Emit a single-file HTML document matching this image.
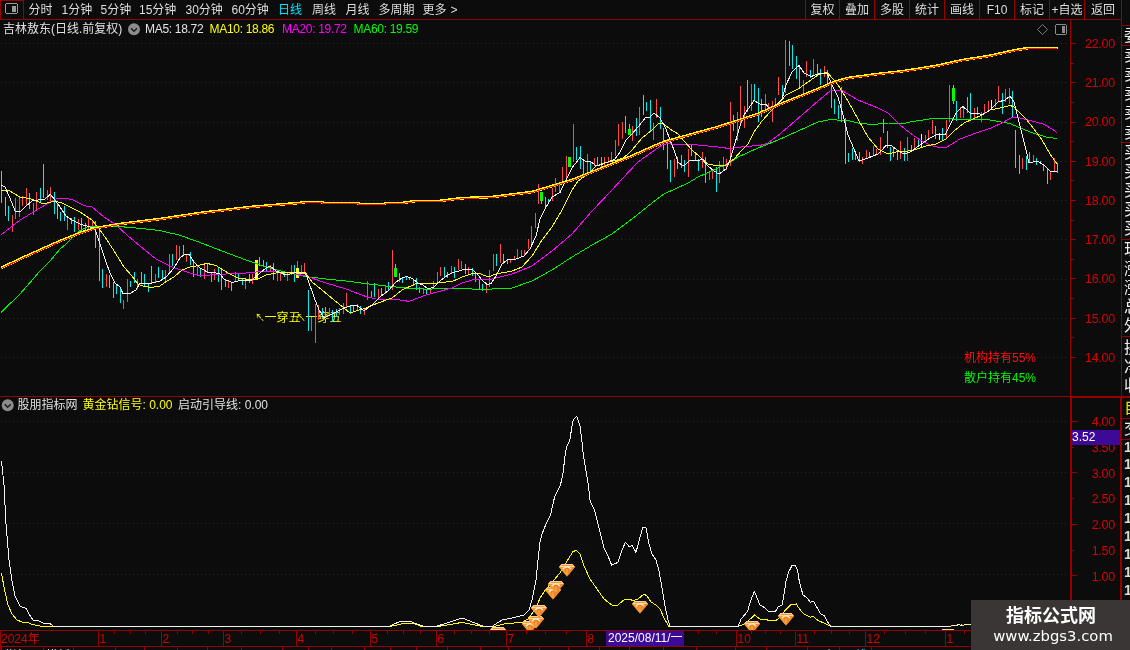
<!DOCTYPE html>
<html lang="zh"><head><meta charset="utf-8"><title>吉林敖东 日线</title>
<style>
html,body{margin:0;padding:0;background:#0c0c0c}
body{width:1130px;height:650px;position:relative;overflow:hidden;font-family:"Liberation Sans","Noto Sans CJK SC",sans-serif;font-size:12px;color:#dcdcdc}
svg{position:absolute;left:0;top:0}
#txt,#under{position:absolute;left:0;top:0;width:1130px;height:650px;will-change:transform}
#side,#wm{will-change:transform}
.dot{stroke:#8c0000;stroke-width:1;stroke-dasharray:1 3;shape-rendering:crispEdges}
.pl{fill:none;stroke-width:1;shape-rendering:crispEdges;stroke-linejoin:round}
svg rect{shape-rendering:crispEdges}
.t{position:absolute;white-space:nowrap;line-height:19px;height:19px}
.tb{color:#dedede}
.tb.sel{color:#00e5ff}
.r2{color:#e0e0e0}
.ma{letter-spacing:-0.3px}
.ann{color:#ffff00}
.hold{letter-spacing:0}
.ax{right:15px;color:#d80000;text-align:right;font-size:12.5px;letter-spacing:-0.25px}
.tm{color:#d80000;line-height:18px}
.bt{color:#f0f0f0;line-height:14px}
.pbox{position:absolute;background:#3c0a96;color:#fff;overflow:hidden}
.pbox span{position:absolute;left:0;top:-2px;line-height:19px;white-space:nowrap}
#side{position:absolute;left:1122px;top:20px;width:8px;height:630px;overflow:hidden}
#side .sd{position:absolute;left:2px;font-size:16px;line-height:24px;white-space:nowrap;margin-top:-20px}
#side .one{font-weight:bold;font-size:14px;line-height:18px;left:2px}
#side i{position:absolute;left:0;width:8px;height:1px;background:#960000;margin-top:-20px}
#wm{position:absolute;left:971px;top:600px;width:159px;height:50px;background:#3b3636;color:#fff;text-align:center}
#wm b{position:absolute;left:0;width:160px;top:3.3px;font-size:18px;line-height:26px;font-weight:bold;letter-spacing:0}
#wm span{position:absolute;left:0;width:164px;top:25px;font-size:14.8px;line-height:22px;font-family:"DejaVu Sans","Liberation Sans",sans-serif}
</style></head><body>
<div id="under"><span class="t ann" style="left:255px;top:307.7px;font-size:10px">↖</span><span class="t ann" style="left:264.5px;top:308.9px">一穿五</span><span class="t ann" style="left:296px;top:307.7px;font-size:10px">↖</span><span class="t ann" style="left:305.5px;top:308.9px">一穿五</span></div>
<svg width="1130" height="650" viewBox="0 0 1130 650">
<defs>
<linearGradient id="dg1" x1="0" y1="0" x2="0" y2="1"><stop offset="0" stop-color="#ffe2a8"/><stop offset="1" stop-color="#f59a30"/></linearGradient>
<linearGradient id="dg2" x1="0" y1="0" x2="0" y2="1"><stop offset="0" stop-color="#f8a23a"/><stop offset="1" stop-color="#e8761a"/></linearGradient>
<g id="dia"><path d="M2.5 0 H13.5 L16 3 L8 12.4 L0 3 Z" fill="#ee7f1c"/><path d="M0 3 L8 12.4 L5.2 3 Z" fill="#f59c3c"/><path d="M10.8 3 L8 12.4 L16 3 Z" fill="#f08a28"/><path d="M2.5 0 H13.5 L16 3 H0 Z" fill="#ffd494"/><path d="M2.5 1.5 H13.5" stroke="#ee9448" stroke-width="1" fill="none"/><path d="M4 5 Q8 0.8 12 5" stroke="#fff1cf" stroke-width="1.3" fill="none"/><path d="M8 5 V11" stroke="#f8b763" stroke-width="1" fill="none"/></g>
<clipPath id="cpd"><rect x="0" y="396" width="1070" height="234"/></clipPath>
</defs>
<line x1="1" x2="1067" y1="43.5" y2="43.5" class="dot"/>
<line x1="1" x2="1067" y1="82.5" y2="82.5" class="dot"/>
<line x1="1" x2="1067" y1="122.5" y2="122.5" class="dot"/>
<line x1="1" x2="1067" y1="161.5" y2="161.5" class="dot"/>
<line x1="1" x2="1067" y1="200.5" y2="200.5" class="dot"/>
<line x1="1" x2="1067" y1="239.5" y2="239.5" class="dot"/>
<line x1="1" x2="1067" y1="279.5" y2="279.5" class="dot"/>
<line x1="1" x2="1067" y1="318.5" y2="318.5" class="dot"/>
<line x1="1" x2="1067" y1="357.5" y2="357.5" class="dot"/>
<line x1="1" x2="1067" y1="421.5" y2="421.5" class="dot"/>
<line x1="1" x2="1067" y1="472.5" y2="472.5" class="dot"/>
<line x1="1" x2="1067" y1="523.5" y2="523.5" class="dot"/>
<line x1="1" x2="1067" y1="574.5" y2="574.5" class="dot"/>
<rect x="0" y="19" width="1122" height="1" fill="#960000"/>
<rect x="0" y="0" width="1" height="20" fill="#960000"/>
<rect x="23" y="0" width="1" height="20" fill="#960000"/>
<rect x="0" y="0" width="24" height="1" fill="#960000"/>
<rect x="805" y="0" width="1" height="19" fill="#960000"/>
<rect x="839" y="0" width="1" height="19" fill="#960000"/>
<rect x="874" y="0" width="1" height="19" fill="#960000"/>
<rect x="909" y="0" width="1" height="19" fill="#960000"/>
<rect x="944" y="0" width="1" height="19" fill="#960000"/>
<rect x="979" y="0" width="1" height="19" fill="#960000"/>
<rect x="1014" y="0" width="1" height="19" fill="#960000"/>
<rect x="1049" y="0" width="1" height="19" fill="#960000"/>
<rect x="1084" y="0" width="1" height="19" fill="#960000"/>
<rect x="1121" y="0" width="1" height="397" fill="#960000"/>
<rect x="1120" y="397" width="2" height="253" fill="#960000"/>
<rect x="1070" y="20" width="1" height="376" fill="#960000"/>
<rect x="1070" y="396" width="2" height="235" fill="#960000"/>
<rect x="0" y="396" width="1070" height="1" fill="#960000"/>
<rect x="1070" y="396" width="60" height="2" fill="#960000"/>
<rect x="0" y="630" width="1071" height="1" fill="#960000"/>
<rect x="0" y="646" width="1071" height="1" fill="#960000"/>
<rect x="0" y="630" width="1" height="20" fill="#960000"/>
<rect x="1071" y="43" width="5" height="1" fill="#960000"/>
<rect x="1071" y="63" width="3" height="1" fill="#960000"/>
<rect x="1071" y="82" width="5" height="1" fill="#960000"/>
<rect x="1071" y="102" width="3" height="1" fill="#960000"/>
<rect x="1071" y="122" width="5" height="1" fill="#960000"/>
<rect x="1071" y="141" width="3" height="1" fill="#960000"/>
<rect x="1071" y="161" width="5" height="1" fill="#960000"/>
<rect x="1071" y="180" width="3" height="1" fill="#960000"/>
<rect x="1071" y="200" width="5" height="1" fill="#960000"/>
<rect x="1071" y="220" width="3" height="1" fill="#960000"/>
<rect x="1071" y="239" width="5" height="1" fill="#960000"/>
<rect x="1071" y="259" width="3" height="1" fill="#960000"/>
<rect x="1071" y="278" width="5" height="1" fill="#960000"/>
<rect x="1071" y="298" width="3" height="1" fill="#960000"/>
<rect x="1071" y="318" width="5" height="1" fill="#960000"/>
<rect x="1071" y="337" width="3" height="1" fill="#960000"/>
<rect x="1071" y="357" width="5" height="1" fill="#960000"/>
<rect x="1072" y="421" width="5" height="1" fill="#960000"/>
<rect x="1072" y="447" width="2" height="1" fill="#960000"/>
<rect x="1072" y="472" width="5" height="1" fill="#960000"/>
<rect x="1072" y="498" width="2" height="1" fill="#960000"/>
<rect x="1072" y="524" width="5" height="1" fill="#960000"/>
<rect x="1072" y="550" width="2" height="1" fill="#960000"/>
<rect x="1072" y="575" width="5" height="1" fill="#960000"/>
<rect x="1072" y="601" width="2" height="1" fill="#960000"/>
<rect x="98" y="631" width="1" height="15" fill="#960000"/>
<rect x="161" y="631" width="1" height="15" fill="#960000"/>
<rect x="223" y="631" width="1" height="15" fill="#960000"/>
<rect x="296" y="631" width="1" height="15" fill="#960000"/>
<rect x="370" y="631" width="1" height="15" fill="#960000"/>
<rect x="436" y="631" width="1" height="15" fill="#960000"/>
<rect x="506" y="631" width="1" height="15" fill="#960000"/>
<rect x="586" y="631" width="1" height="15" fill="#960000"/>
<rect x="736" y="631" width="1" height="15" fill="#960000"/>
<rect x="795" y="631" width="1" height="15" fill="#960000"/>
<rect x="865" y="631" width="1" height="15" fill="#960000"/>
<rect x="945" y="631" width="1" height="15" fill="#960000"/>
<rect x="666" y="631" width="1" height="15" fill="#960000"/>
<rect x="114" y="631" width="1" height="3" fill="#960000"/>
<rect x="130" y="631" width="1" height="3" fill="#960000"/>
<rect x="145" y="631" width="1" height="3" fill="#960000"/>
<rect x="177" y="631" width="1" height="3" fill="#960000"/>
<rect x="192" y="631" width="1" height="3" fill="#960000"/>
<rect x="208" y="631" width="1" height="3" fill="#960000"/>
<rect x="241" y="631" width="1" height="3" fill="#960000"/>
<rect x="260" y="631" width="1" height="3" fill="#960000"/>
<rect x="279" y="631" width="1" height="3" fill="#960000"/>
<rect x="315" y="631" width="1" height="3" fill="#960000"/>
<rect x="333" y="631" width="1" height="3" fill="#960000"/>
<rect x="352" y="631" width="1" height="3" fill="#960000"/>
<rect x="387" y="631" width="1" height="3" fill="#960000"/>
<rect x="403" y="631" width="1" height="3" fill="#960000"/>
<rect x="420" y="631" width="1" height="3" fill="#960000"/>
<rect x="454" y="631" width="1" height="3" fill="#960000"/>
<rect x="471" y="631" width="1" height="3" fill="#960000"/>
<rect x="489" y="631" width="1" height="3" fill="#960000"/>
<rect x="526" y="631" width="1" height="3" fill="#960000"/>
<rect x="545" y="631" width="1" height="3" fill="#960000"/>
<rect x="566" y="631" width="1" height="3" fill="#960000"/>
<rect x="698" y="631" width="1" height="3" fill="#960000"/>
<rect x="716" y="631" width="1" height="3" fill="#960000"/>
<rect x="751" y="631" width="1" height="3" fill="#960000"/>
<rect x="765" y="631" width="1" height="3" fill="#960000"/>
<rect x="780" y="631" width="1" height="3" fill="#960000"/>
<rect x="814" y="631" width="1" height="3" fill="#960000"/>
<rect x="831" y="631" width="1" height="3" fill="#960000"/>
<rect x="849" y="631" width="1" height="3" fill="#960000"/>
<rect x="884" y="631" width="1" height="3" fill="#960000"/>
<rect x="905" y="631" width="1" height="3" fill="#960000"/>
<rect x="925" y="631" width="1" height="3" fill="#960000"/>
<rect x="964" y="631" width="1" height="3" fill="#960000"/>
<rect x="1" y="647" width="1" height="3" fill="#960000"/>
<rect x="43" y="647" width="1" height="3" fill="#960000"/>
<rect x="73" y="647" width="1" height="3" fill="#960000"/>
<rect x="115" y="647" width="1" height="3" fill="#960000"/>
<rect x="144" y="647" width="1" height="3" fill="#960000"/>
<rect x="177" y="647" width="1" height="3" fill="#960000"/>
<rect x="207" y="647" width="1" height="3" fill="#960000"/>
<rect x="241" y="647" width="1" height="3" fill="#960000"/>
<rect x="282" y="647" width="1" height="3" fill="#960000"/>
<rect x="308" y="647" width="1" height="3" fill="#960000"/>
<rect x="331" y="647" width="1" height="3" fill="#960000"/>
<rect x="364" y="647" width="1" height="3" fill="#960000"/>
<rect x="390" y="647" width="1" height="3" fill="#960000"/>
<rect x="416" y="647" width="1" height="3" fill="#960000"/>
<rect x="447" y="647" width="1" height="3" fill="#960000"/>
<rect x="480" y="647" width="1" height="3" fill="#960000"/>
<rect x="508" y="647" width="1" height="3" fill="#960000"/>
<rect x="539" y="647" width="1" height="3" fill="#960000"/>
<rect x="568" y="647" width="1" height="3" fill="#960000"/>
<rect x="599" y="647" width="1" height="3" fill="#960000"/>
<rect x="629" y="647" width="1" height="3" fill="#960000"/>
<rect x="663" y="647" width="1" height="3" fill="#960000"/>
<rect x="696" y="647" width="1" height="3" fill="#960000"/>
<rect x="735" y="647" width="1" height="3" fill="#960000"/>
<rect x="766" y="647" width="1" height="3" fill="#960000"/>
<rect x="807" y="647" width="1" height="3" fill="#960000"/>
<rect x="839" y="647" width="1" height="3" fill="#960000"/>
<rect x="871" y="647" width="1" height="3" fill="#960000"/>
<rect x="1" y="171" width="1" height="32" fill="#00f0f0"/>
<rect x="5" y="197" width="1" height="19" fill="#00f0f0"/>
<rect x="8" y="206" width="1" height="15" fill="#00f0f0"/>
<rect x="12" y="215" width="1" height="17" fill="#ff4848"/>
<rect x="15" y="198" width="1" height="21" fill="#ff4848"/>
<rect x="19" y="197" width="1" height="20" fill="#ff4848"/>
<rect x="22" y="196" width="1" height="10" fill="#ff4848"/>
<rect x="26" y="188" width="1" height="17" fill="#ff4848"/>
<rect x="29" y="193" width="1" height="16" fill="#00f0f0"/>
<rect x="33" y="203" width="1" height="12" fill="#ff4848"/>
<rect x="36" y="192" width="1" height="18" fill="#ff4848"/>
<rect x="40" y="188" width="1" height="14" fill="#00f0f0"/>
<rect x="43" y="164" width="1" height="34" fill="#00f0f0"/>
<rect x="47" y="190" width="1" height="10" fill="#ff4848"/>
<rect x="50" y="187" width="1" height="15" fill="#ff4848"/>
<rect x="54" y="192" width="1" height="22" fill="#00f0f0"/>
<rect x="57" y="204" width="1" height="15" fill="#00f0f0"/>
<rect x="60" y="212" width="1" height="9" fill="#00f0f0"/>
<rect x="64" y="206" width="1" height="15" fill="#00f0f0"/>
<rect x="67" y="217" width="1" height="13" fill="#ff4848"/>
<rect x="71" y="218" width="1" height="6" fill="#00f0f0"/>
<rect x="74" y="217" width="1" height="15" fill="#00f0f0"/>
<rect x="78" y="219" width="1" height="11" fill="#ff4848"/>
<rect x="81" y="218" width="1" height="13" fill="#00f0f0"/>
<rect x="85" y="223" width="1" height="8" fill="#00f0f0"/>
<rect x="88" y="218" width="1" height="11" fill="#ff4848"/>
<rect x="92" y="220" width="1" height="9" fill="#ff4848"/>
<rect x="95" y="221" width="1" height="27" fill="#00f0f0"/>
<rect x="99" y="229" width="1" height="52" fill="#00f0f0"/>
<rect x="102" y="269" width="1" height="19" fill="#00f0f0"/>
<rect x="106" y="274" width="1" height="13" fill="#ff4848"/>
<rect x="109" y="275" width="1" height="13" fill="#00f0f0"/>
<rect x="113" y="282" width="1" height="16" fill="#00f0f0"/>
<rect x="116" y="285" width="1" height="9" fill="#00f0f0"/>
<rect x="120" y="287" width="1" height="16" fill="#00f0f0"/>
<rect x="123" y="300" width="1" height="9" fill="#ff4848"/>
<rect x="127" y="279" width="1" height="23" fill="#ff4848"/>
<rect x="130" y="281" width="1" height="6" fill="#00f0f0"/>
<rect x="134" y="272" width="1" height="11" fill="#00f0f0"/>
<rect x="137" y="279" width="1" height="10" fill="#ff4848"/>
<rect x="141" y="272" width="1" height="12" fill="#00f0f0"/>
<rect x="144" y="274" width="1" height="12" fill="#00f0f0"/>
<rect x="148" y="283" width="1" height="9" fill="#00f0f0"/>
<rect x="151" y="266" width="1" height="17" fill="#00f0f0"/>
<rect x="155" y="274" width="1" height="9" fill="#ff4848"/>
<rect x="158" y="267" width="1" height="11" fill="#00f0f0"/>
<rect x="162" y="270" width="1" height="10" fill="#00f0f0"/>
<rect x="165" y="270" width="1" height="11" fill="#ff4848"/>
<rect x="169" y="254" width="1" height="19" fill="#ff4848"/>
<rect x="172" y="254" width="1" height="12" fill="#00f0f0"/>
<rect x="176" y="245" width="1" height="15" fill="#ff4848"/>
<rect x="179" y="246" width="1" height="14" fill="#ff4848"/>
<rect x="183" y="245" width="1" height="11" fill="#00f0f0"/>
<rect x="186" y="254" width="1" height="8" fill="#ff4848"/>
<rect x="190" y="252" width="1" height="13" fill="#00f0f0"/>
<rect x="193" y="260" width="1" height="17" fill="#00f0f0"/>
<rect x="197" y="265" width="1" height="11" fill="#ff4848"/>
<rect x="200" y="269" width="1" height="8" fill="#00f0f0"/>
<rect x="204" y="265" width="1" height="14" fill="#ff4848"/>
<rect x="207" y="264" width="1" height="9" fill="#00f0f0"/>
<rect x="211" y="273" width="1" height="9" fill="#00f0f0"/>
<rect x="214" y="269" width="1" height="11" fill="#ff4848"/>
<rect x="218" y="267" width="1" height="15" fill="#00f0f0"/>
<rect x="221" y="270" width="1" height="20" fill="#00f0f0"/>
<rect x="225" y="280" width="1" height="7" fill="#00f0f0"/>
<rect x="228" y="281" width="1" height="7" fill="#ff4848"/>
<rect x="231" y="283" width="1" height="8" fill="#00f0f0"/>
<rect x="235" y="272" width="1" height="10" fill="#ff4848"/>
<rect x="238" y="273" width="1" height="8" fill="#00f0f0"/>
<rect x="242" y="278" width="1" height="7" fill="#00f0f0"/>
<rect x="245" y="281" width="1" height="8" fill="#ff4848"/>
<rect x="249" y="274" width="1" height="9" fill="#00f0f0"/>
<rect x="252" y="274" width="1" height="10" fill="#ff4848"/>
<rect x="255" y="260" width="3" height="19" fill="#ffff00"/>
<rect x="259" y="257" width="1" height="9" fill="#00f0f0"/>
<rect x="263" y="260" width="1" height="7" fill="#00f0f0"/>
<rect x="266" y="262" width="1" height="9" fill="#00f0f0"/>
<rect x="270" y="265" width="1" height="7" fill="#ff4848"/>
<rect x="273" y="263" width="1" height="17" fill="#00f0f0"/>
<rect x="277" y="273" width="1" height="8" fill="#ff4848"/>
<rect x="280" y="273" width="1" height="8" fill="#ff4848"/>
<rect x="284" y="271" width="1" height="6" fill="#00f0f0"/>
<rect x="287" y="273" width="1" height="8" fill="#ff4848"/>
<rect x="291" y="265" width="1" height="10" fill="#ff4848"/>
<rect x="294" y="265" width="1" height="17" fill="#00f0f0"/>
<rect x="297" y="261" width="1" height="7" fill="#ff4848"/>
<rect x="296" y="268" width="3" height="10" fill="#ffff00"/>
<rect x="301" y="265" width="1" height="8" fill="#ff4848"/>
<rect x="304" y="263" width="1" height="11" fill="#ff4848"/>
<rect x="308" y="290" width="1" height="41" fill="#00f0f0"/>
<rect x="311" y="317" width="1" height="14" fill="#ff4848"/>
<rect x="315" y="304" width="1" height="39" fill="#ff4848"/>
<rect x="318" y="305" width="1" height="15" fill="#ff4848"/>
<rect x="322" y="308" width="1" height="10" fill="#00f0f0"/>
<rect x="325" y="307" width="1" height="11" fill="#00f0f0"/>
<rect x="329" y="308" width="1" height="8" fill="#ff4848"/>
<rect x="332" y="310" width="1" height="12" fill="#00f0f0"/>
<rect x="336" y="309" width="1" height="8" fill="#00f0f0"/>
<rect x="339" y="308" width="1" height="7" fill="#ff4848"/>
<rect x="343" y="303" width="1" height="11" fill="#ff4848"/>
<rect x="346" y="293" width="1" height="14" fill="#ff4848"/>
<rect x="350" y="306" width="1" height="8" fill="#00f0f0"/>
<rect x="353" y="305" width="1" height="7" fill="#00f0f0"/>
<rect x="357" y="304" width="1" height="6" fill="#ff4848"/>
<rect x="360" y="306" width="1" height="8" fill="#00f0f0"/>
<rect x="364" y="309" width="1" height="6" fill="#ff4848"/>
<rect x="367" y="281" width="1" height="19" fill="#ff4848"/>
<rect x="371" y="291" width="1" height="7" fill="#00f0f0"/>
<rect x="374" y="283" width="1" height="14" fill="#00f0f0"/>
<rect x="378" y="289" width="1" height="9" fill="#ff4848"/>
<rect x="381" y="288" width="1" height="7" fill="#00f0f0"/>
<rect x="385" y="286" width="1" height="8" fill="#ff4848"/>
<rect x="388" y="282" width="1" height="8" fill="#00f0f0"/>
<rect x="392" y="250" width="1" height="40" fill="#ff4848"/>
<rect x="395" y="264" width="1" height="4" fill="#00f0f0"/>
<rect x="394" y="268" width="3" height="9" fill="#00ff00"/>
<rect x="399" y="273" width="1" height="9" fill="#00f0f0"/>
<rect x="402" y="277" width="1" height="6" fill="#00f0f0"/>
<rect x="406" y="276" width="1" height="4" fill="#00f0f0"/>
<rect x="409" y="277" width="1" height="3" fill="#00f0f0"/>
<rect x="413" y="280" width="1" height="6" fill="#00f0f0"/>
<rect x="416" y="278" width="1" height="12" fill="#00f0f0"/>
<rect x="419" y="287" width="1" height="6" fill="#00f0f0"/>
<rect x="423" y="288" width="1" height="6" fill="#ff4848"/>
<rect x="426" y="289" width="1" height="5" fill="#00f0f0"/>
<rect x="430" y="288" width="1" height="6" fill="#ff4848"/>
<rect x="433" y="281" width="1" height="8" fill="#ff4848"/>
<rect x="437" y="272" width="1" height="11" fill="#ff4848"/>
<rect x="440" y="267" width="1" height="9" fill="#ff4848"/>
<rect x="444" y="267" width="1" height="10" fill="#00f0f0"/>
<rect x="447" y="272" width="1" height="6" fill="#00f0f0"/>
<rect x="451" y="266" width="1" height="8" fill="#ff4848"/>
<rect x="454" y="267" width="1" height="11" fill="#00f0f0"/>
<rect x="458" y="259" width="1" height="11" fill="#ff4848"/>
<rect x="461" y="261" width="1" height="8" fill="#ff4848"/>
<rect x="465" y="264" width="1" height="10" fill="#00f0f0"/>
<rect x="468" y="267" width="1" height="8" fill="#ff4848"/>
<rect x="472" y="268" width="1" height="8" fill="#00f0f0"/>
<rect x="475" y="273" width="1" height="9" fill="#00f0f0"/>
<rect x="479" y="280" width="1" height="10" fill="#00f0f0"/>
<rect x="482" y="284" width="1" height="7" fill="#00f0f0"/>
<rect x="486" y="284" width="1" height="9" fill="#ff4848"/>
<rect x="489" y="270" width="1" height="17" fill="#ff4848"/>
<rect x="493" y="254" width="1" height="17" fill="#ff4848"/>
<rect x="496" y="254" width="1" height="12" fill="#00f0f0"/>
<rect x="500" y="244" width="1" height="19" fill="#ff4848"/>
<rect x="503" y="254" width="1" height="10" fill="#00f0f0"/>
<rect x="507" y="259" width="1" height="5" fill="#00f0f0"/>
<rect x="510" y="259" width="1" height="4" fill="#ff4848"/>
<rect x="514" y="256" width="1" height="4" fill="#ff4848"/>
<rect x="517" y="249" width="1" height="10" fill="#ff4848"/>
<rect x="521" y="250" width="1" height="6" fill="#ff4848"/>
<rect x="524" y="250" width="1" height="5" fill="#ff4848"/>
<rect x="528" y="239" width="1" height="10" fill="#ff4848"/>
<rect x="531" y="226" width="1" height="18" fill="#ff4848"/>
<rect x="535" y="213" width="1" height="15" fill="#ff4848"/>
<rect x="538" y="184" width="1" height="20" fill="#ff4848"/>
<rect x="541" y="201" width="1" height="3" fill="#00f0f0"/>
<rect x="540" y="192" width="3" height="9" fill="#00ff00"/>
<rect x="545" y="197" width="1" height="11" fill="#00f0f0"/>
<rect x="548" y="199" width="1" height="5" fill="#00f0f0"/>
<rect x="552" y="188" width="1" height="13" fill="#ff4848"/>
<rect x="555" y="178" width="1" height="14" fill="#ff4848"/>
<rect x="559" y="185" width="1" height="7" fill="#ff4848"/>
<rect x="562" y="167" width="1" height="17" fill="#ff4848"/>
<rect x="566" y="156" width="1" height="25" fill="#ff4848"/>
<rect x="568" y="157" width="3" height="10" fill="#00ff00"/>
<rect x="573" y="124" width="1" height="38" fill="#ff4848"/>
<rect x="576" y="147" width="1" height="13" fill="#00f0f0"/>
<rect x="580" y="146" width="1" height="23" fill="#00f0f0"/>
<rect x="583" y="160" width="1" height="15" fill="#00f0f0"/>
<rect x="587" y="154" width="1" height="18" fill="#ff4848"/>
<rect x="590" y="161" width="1" height="11" fill="#00f0f0"/>
<rect x="594" y="158" width="1" height="8" fill="#ff4848"/>
<rect x="597" y="157" width="1" height="9" fill="#00f0f0"/>
<rect x="601" y="157" width="1" height="11" fill="#00f0f0"/>
<rect x="604" y="157" width="1" height="11" fill="#ff4848"/>
<rect x="608" y="157" width="1" height="6" fill="#ff4848"/>
<rect x="611" y="152" width="1" height="9" fill="#ff4848"/>
<rect x="615" y="140" width="1" height="16" fill="#ff4848"/>
<rect x="618" y="124" width="1" height="22" fill="#ff4848"/>
<rect x="622" y="122" width="1" height="17" fill="#ff4848"/>
<rect x="625" y="116" width="1" height="17" fill="#00f0f0"/>
<rect x="629" y="124" width="1" height="5" fill="#00f0f0"/>
<rect x="628" y="129" width="3" height="6" fill="#00ff00"/>
<rect x="632" y="126" width="1" height="15" fill="#ff4848"/>
<rect x="636" y="118" width="1" height="18" fill="#00f0f0"/>
<rect x="639" y="107" width="1" height="28" fill="#ff4848"/>
<rect x="643" y="95" width="1" height="20" fill="#00f0f0"/>
<rect x="646" y="102" width="1" height="9" fill="#00f0f0"/>
<rect x="650" y="100" width="1" height="31" fill="#00f0f0"/>
<rect x="653" y="123" width="1" height="17" fill="#ff4848"/>
<rect x="656" y="99" width="1" height="19" fill="#ff4848"/>
<rect x="660" y="107" width="1" height="22" fill="#00f0f0"/>
<rect x="663" y="128" width="1" height="22" fill="#00f0f0"/>
<rect x="667" y="139" width="1" height="30" fill="#00f0f0"/>
<rect x="670" y="160" width="1" height="22" fill="#00f0f0"/>
<rect x="674" y="159" width="1" height="18" fill="#ff4848"/>
<rect x="677" y="157" width="1" height="12" fill="#00f0f0"/>
<rect x="681" y="155" width="1" height="13" fill="#00f0f0"/>
<rect x="684" y="160" width="1" height="12" fill="#00f0f0"/>
<rect x="688" y="149" width="1" height="28" fill="#ff4848"/>
<rect x="691" y="145" width="1" height="11" fill="#00f0f0"/>
<rect x="695" y="153" width="1" height="7" fill="#00f0f0"/>
<rect x="698" y="159" width="1" height="12" fill="#00f0f0"/>
<rect x="702" y="152" width="1" height="16" fill="#ff4848"/>
<rect x="705" y="157" width="1" height="26" fill="#00f0f0"/>
<rect x="709" y="172" width="1" height="8" fill="#ff4848"/>
<rect x="712" y="170" width="1" height="9" fill="#ff4848"/>
<rect x="716" y="167" width="1" height="25" fill="#00f0f0"/>
<rect x="719" y="161" width="1" height="22" fill="#ff4848"/>
<rect x="723" y="157" width="1" height="14" fill="#ff4848"/>
<rect x="726" y="159" width="1" height="11" fill="#ff4848"/>
<rect x="730" y="102" width="1" height="64" fill="#ff4848"/>
<rect x="733" y="115" width="1" height="16" fill="#00f0f0"/>
<rect x="737" y="112" width="1" height="29" fill="#ff4848"/>
<rect x="740" y="86" width="1" height="38" fill="#ff4848"/>
<rect x="744" y="106" width="1" height="22" fill="#ff4848"/>
<rect x="747" y="80" width="1" height="32" fill="#00f0f0"/>
<rect x="751" y="84" width="1" height="27" fill="#ff4848"/>
<rect x="754" y="84" width="1" height="17" fill="#00f0f0"/>
<rect x="758" y="88" width="1" height="34" fill="#00f0f0"/>
<rect x="761" y="99" width="1" height="18" fill="#00f0f0"/>
<rect x="765" y="94" width="1" height="15" fill="#ff4848"/>
<rect x="768" y="103" width="1" height="8" fill="#ff4848"/>
<rect x="772" y="101" width="1" height="21" fill="#ff4848"/>
<rect x="775" y="98" width="1" height="8" fill="#ff4848"/>
<rect x="778" y="77" width="1" height="18" fill="#ff4848"/>
<rect x="782" y="85" width="1" height="11" fill="#00f0f0"/>
<rect x="785" y="40" width="1" height="53" fill="#ff4848"/>
<rect x="789" y="41" width="1" height="25" fill="#00f0f0"/>
<rect x="792" y="45" width="1" height="24" fill="#00f0f0"/>
<rect x="796" y="56" width="1" height="23" fill="#00f0f0"/>
<rect x="799" y="65" width="1" height="22" fill="#00f0f0"/>
<rect x="803" y="80" width="1" height="13" fill="#ff4848"/>
<rect x="806" y="61" width="1" height="16" fill="#ff4848"/>
<rect x="810" y="70" width="1" height="8" fill="#00f0f0"/>
<rect x="813" y="59" width="1" height="16" fill="#ff4848"/>
<rect x="817" y="64" width="1" height="10" fill="#00f0f0"/>
<rect x="820" y="69" width="1" height="16" fill="#00f0f0"/>
<rect x="824" y="66" width="1" height="11" fill="#ff4848"/>
<rect x="827" y="70" width="1" height="14" fill="#00f0f0"/>
<rect x="831" y="84" width="1" height="24" fill="#00f0f0"/>
<rect x="834" y="99" width="1" height="15" fill="#00f0f0"/>
<rect x="838" y="105" width="1" height="14" fill="#00f0f0"/>
<rect x="841" y="87" width="1" height="35" fill="#00f0f0"/>
<rect x="845" y="118" width="1" height="46" fill="#00f0f0"/>
<rect x="848" y="153" width="1" height="9" fill="#00f0f0"/>
<rect x="852" y="148" width="1" height="12" fill="#00f0f0"/>
<rect x="855" y="153" width="1" height="7" fill="#00f0f0"/>
<rect x="859" y="152" width="1" height="10" fill="#00f0f0"/>
<rect x="862" y="157" width="1" height="7" fill="#ff4848"/>
<rect x="866" y="150" width="1" height="8" fill="#ff4848"/>
<rect x="869" y="152" width="1" height="6" fill="#00f0f0"/>
<rect x="873" y="146" width="1" height="10" fill="#ff4848"/>
<rect x="876" y="149" width="1" height="6" fill="#ff4848"/>
<rect x="880" y="137" width="1" height="18" fill="#ff4848"/>
<rect x="883" y="119" width="1" height="14" fill="#00f0f0"/>
<rect x="887" y="131" width="1" height="17" fill="#00f0f0"/>
<rect x="890" y="147" width="1" height="14" fill="#00f0f0"/>
<rect x="893" y="148" width="1" height="9" fill="#00f0f0"/>
<rect x="897" y="151" width="1" height="9" fill="#00f0f0"/>
<rect x="900" y="141" width="1" height="18" fill="#ff4848"/>
<rect x="904" y="148" width="1" height="13" fill="#00f0f0"/>
<rect x="907" y="137" width="1" height="24" fill="#ff4848"/>
<rect x="911" y="145" width="1" height="7" fill="#00f0f0"/>
<rect x="914" y="138" width="1" height="12" fill="#ff4848"/>
<rect x="918" y="138" width="1" height="8" fill="#00f0f0"/>
<rect x="921" y="134" width="1" height="13" fill="#f0f0f0"/>
<rect x="925" y="135" width="1" height="8" fill="#ff4848"/>
<rect x="928" y="130" width="1" height="9" fill="#ff4848"/>
<rect x="932" y="120" width="1" height="14" fill="#ff4848"/>
<rect x="935" y="126" width="1" height="13" fill="#00f0f0"/>
<rect x="939" y="133" width="1" height="7" fill="#f0f0f0"/>
<rect x="942" y="128" width="1" height="12" fill="#00f0f0"/>
<rect x="946" y="120" width="1" height="18" fill="#ff4848"/>
<rect x="949" y="85" width="1" height="37" fill="#ff4848"/>
<rect x="953" y="85" width="1" height="19" fill="#00f0f0"/>
<rect x="952" y="88" width="3" height="13" fill="#00ff00"/>
<rect x="956" y="101" width="1" height="20" fill="#00f0f0"/>
<rect x="960" y="107" width="1" height="11" fill="#ff4848"/>
<rect x="963" y="106" width="1" height="12" fill="#ff4848"/>
<rect x="967" y="97" width="1" height="16" fill="#00f0f0"/>
<rect x="970" y="93" width="1" height="27" fill="#00f0f0"/>
<rect x="974" y="108" width="1" height="10" fill="#ff4848"/>
<rect x="977" y="107" width="1" height="8" fill="#00f0f0"/>
<rect x="981" y="112" width="1" height="10" fill="#ff4848"/>
<rect x="984" y="104" width="1" height="10" fill="#ff4848"/>
<rect x="988" y="101" width="1" height="9" fill="#ff4848"/>
<rect x="991" y="100" width="1" height="8" fill="#f0f0f0"/>
<rect x="995" y="99" width="1" height="8" fill="#ff4848"/>
<rect x="998" y="86" width="1" height="15" fill="#ff4848"/>
<rect x="1002" y="93" width="1" height="21" fill="#00f0f0"/>
<rect x="1005" y="89" width="1" height="13" fill="#ff4848"/>
<rect x="1009" y="88" width="1" height="16" fill="#ff4848"/>
<rect x="1012" y="91" width="1" height="27" fill="#00f0f0"/>
<rect x="1015" y="130" width="1" height="38" fill="#00f0f0"/>
<rect x="1019" y="155" width="1" height="19" fill="#00f0f0"/>
<rect x="1022" y="158" width="1" height="11" fill="#ff4848"/>
<rect x="1026" y="156" width="1" height="14" fill="#00f0f0"/>
<rect x="1029" y="152" width="1" height="10" fill="#00f0f0"/>
<rect x="1033" y="155" width="1" height="7" fill="#ff4848"/>
<rect x="1036" y="158" width="1" height="7" fill="#00f0f0"/>
<rect x="1040" y="161" width="1" height="3" fill="#00f0f0"/>
<rect x="1043" y="165" width="1" height="6" fill="#00f0f0"/>
<rect x="1047" y="169" width="1" height="15" fill="#00f0f0"/>
<rect x="1050" y="172" width="1" height="8" fill="#ff4848"/>
<rect x="1054" y="158" width="1" height="14" fill="#ff4848"/>
<rect x="1057" y="163" width="1" height="10" fill="#00f0f0"/>
<polyline class="pl" stroke="#00f400" points="1.0,312.4 20.0,294.0 40.0,271.0 50.0,261.0 60.0,249.0 66.0,244.0 80.0,230.5 88.0,226.5 100.0,226.0 120.0,226.6 140.0,228.4 160.0,230.5 180.0,235.3 200.0,242.5 226.0,252.5 246.0,260.0 266.0,267.0 286.0,272.4 306.0,276.6 326.0,279.0 346.0,281.0 366.0,283.6 386.0,286.0 406.0,288.0 426.0,289.2 452.0,288.4 472.0,289.0 492.0,289.0 512.0,288.0 532.0,281.0 552.0,270.0 572.0,257.0 592.0,245.0 612.0,234.0 632.0,219.0 652.0,203.0 664.0,194.0 678.0,187.6 688.0,183.0 698.0,177.0 718.0,168.0 728.0,163.6 738.0,157.0 758.0,148.0 778.0,140.0 798.0,131.0 818.0,122.0 830.0,119.6 848.0,120.6 858.0,123.0 872.0,124.6 888.0,123.0 904.0,123.4 910.0,122.0 936.0,118.0 960.0,119.4 990.0,120.0 1010.0,123.6 1030.0,132.0 1046.0,137.0 1057.0,138.6"/>
<polyline class="pl" stroke="#ff00ff" points="1.0,235.0 20.0,220.0 40.0,208.0 56.0,199.0 64.0,198.0 72.0,199.6 84.0,205.6 92.0,207.0 104.0,217.0 116.0,225.0 128.0,236.0 140.0,246.0 156.0,259.0 172.0,267.0 190.0,273.0 200.0,275.6 226.0,274.0 246.0,273.0 266.0,271.0 286.0,272.4 306.0,276.0 326.0,283.0 346.0,289.0 366.0,296.6 376.0,299.0 396.0,299.4 409.0,301.4 426.0,295.0 452.0,288.0 462.0,283.0 472.0,280.0 492.0,279.0 512.0,274.0 532.0,266.0 552.0,251.0 572.0,234.0 592.0,211.0 612.0,190.0 622.0,179.0 638.0,162.0 652.0,152.0 662.0,145.0 668.0,143.6 678.0,144.6 698.0,145.0 718.0,147.0 730.0,148.6 744.0,146.5 758.0,145.6 764.0,144.6 768.0,143.0 778.0,135.5 788.0,127.0 798.0,118.5 818.0,101.0 830.0,91.0 842.0,90.6 858.0,100.0 878.0,108.0 888.0,113.0 900.0,125.0 910.0,133.0 920.0,140.0 930.0,145.0 938.0,147.4 947.0,147.0 960.0,139.0 976.0,133.0 990.0,128.4 1002.0,123.0 1012.0,117.4 1020.0,118.0 1030.0,120.4 1044.0,124.4 1052.0,129.0 1057.0,132.6"/>
<polyline class="pl" stroke="#ffff00" points="1.0,190.0 8.0,190.0 20.0,197.0 30.0,198.6 44.0,204.0 54.0,201.0 62.0,203.0 80.0,212.0 92.0,220.0 100.0,230.0 108.0,241.5 116.0,254.0 124.0,267.0 132.0,276.0 138.0,284.0 144.0,286.6 152.0,287.4 160.0,286.0 166.0,281.6 174.0,277.0 182.0,270.0 190.0,267.0 198.0,265.6 207.0,263.4 216.0,265.6 226.0,271.8 238.0,278.0 250.0,279.6 258.0,279.0 266.0,275.0 276.0,273.0 292.0,272.4 306.0,273.6 312.0,282.0 322.0,290.0 334.0,300.0 344.0,308.0 350.0,313.0 356.0,311.0 366.0,308.0 378.0,303.0 392.0,298.0 402.0,290.0 416.0,283.6 434.0,283.6 441.0,282.4 452.0,281.6 462.0,277.0 472.0,273.6 480.0,273.6 488.0,277.0 496.0,274.0 512.0,271.0 522.0,267.0 532.0,256.0 542.0,240.0 552.0,227.0 562.0,210.0 572.0,190.0 578.0,181.0 588.0,174.0 596.0,166.0 606.0,162.4 616.0,160.4 624.0,157.6 632.0,150.0 642.0,138.0 652.0,130.0 658.0,124.0 663.0,123.6 670.0,129.0 678.0,134.0 684.0,141.0 692.0,150.0 700.0,157.0 708.0,164.0 718.0,166.0 726.0,165.0 734.0,159.0 742.0,150.0 748.0,144.0 754.0,132.0 762.0,121.0 770.0,112.0 778.0,104.0 786.0,95.0 798.0,89.0 808.0,82.0 818.0,75.0 827.0,72.0 838.0,85.0 848.0,101.0 858.0,119.0 868.0,137.0 878.0,149.0 888.0,154.0 896.0,152.0 904.0,151.6 914.0,150.0 926.0,146.0 936.0,144.0 946.0,139.0 954.0,131.0 964.0,123.0 974.0,118.6 982.0,115.0 990.0,110.0 1000.0,108.0 1010.0,105.4 1014.0,107.0 1026.0,119.0 1034.0,129.0 1042.0,140.0 1050.0,154.0 1057.0,164.0"/>
<polyline class="pl" stroke="#f4f4f4" points="1.0,185.0 5.0,187.0 10.0,198.0 15.0,211.0 20.0,212.0 26.0,206.0 32.0,201.0 40.0,199.6 45.0,199.0 50.4,194.4 55.0,200.0 60.0,207.0 66.0,216.0 72.0,220.0 80.0,224.0 90.0,227.0 95.0,229.0 100.0,244.0 106.0,262.0 110.0,273.0 115.0,283.0 120.0,287.0 123.0,293.6 130.0,293.6 136.0,290.0 140.0,283.0 150.0,283.6 160.0,281.0 166.0,277.0 174.0,268.0 180.0,258.0 184.0,255.0 189.0,254.4 194.0,262.0 200.0,268.0 208.0,272.4 216.0,273.0 220.0,274.0 224.0,279.0 232.0,282.4 242.0,280.0 252.0,280.0 260.0,273.0 266.0,268.0 270.0,266.0 276.0,271.0 286.0,275.0 294.0,273.0 305.0,272.0 308.0,280.0 314.0,297.0 319.0,310.0 324.0,318.0 334.0,313.0 344.0,308.0 350.0,306.0 357.0,305.6 364.0,311.0 372.0,305.0 380.0,297.0 388.0,291.0 396.0,282.0 402.0,278.0 407.0,276.4 413.0,279.0 418.0,283.0 423.0,285.0 428.0,289.0 434.0,287.0 441.0,280.0 448.0,275.0 452.0,273.0 462.0,270.0 472.0,269.0 478.0,275.0 482.0,280.0 487.0,284.4 491.0,283.6 496.0,276.0 502.0,264.0 507.0,260.0 516.0,259.0 524.0,256.0 530.0,249.0 536.0,236.0 540.0,219.0 545.0,209.0 552.0,197.0 560.0,192.5 566.0,180.0 572.0,168.0 580.0,157.4 585.0,161.0 590.0,161.0 595.0,165.0 600.0,165.0 608.0,162.0 615.0,159.0 620.0,152.0 626.0,140.0 632.0,134.0 638.0,127.0 646.0,117.0 650.0,117.0 654.0,113.0 660.0,118.0 666.0,129.0 670.0,140.0 674.0,150.0 678.0,162.5 684.0,166.0 690.0,160.0 698.0,161.0 702.0,159.0 708.0,166.0 714.0,171.0 719.0,174.0 726.0,169.0 730.0,160.0 735.0,143.0 740.0,126.0 744.0,115.0 754.0,100.5 760.0,104.0 766.0,104.0 770.0,110.0 778.0,103.0 782.0,99.0 786.0,85.0 792.0,72.0 799.0,65.4 804.0,73.0 811.0,76.6 818.0,74.0 827.0,73.0 832.0,85.0 838.0,97.0 843.0,115.0 848.0,135.0 854.0,149.0 859.0,161.0 868.0,158.0 878.0,154.0 886.0,145.6 892.0,146.0 898.0,150.6 904.0,154.0 910.0,152.0 920.0,145.0 930.0,138.0 938.0,134.0 945.0,135.0 950.0,125.0 956.0,113.0 963.0,106.4 970.0,113.0 978.0,113.0 982.0,115.0 990.0,110.0 998.0,102.0 1005.0,100.0 1010.0,96.0 1014.0,102.0 1020.0,126.0 1026.0,150.0 1029.0,163.0 1037.0,161.0 1044.0,165.0 1050.0,171.0 1057.0,172.0"/>
<polyline class="pl" stroke="#ffff00" style="stroke-width:2.7;stroke-linecap:butt" points="1.0,268.0 20.0,259.0 40.0,250.0 60.0,241.0 80.0,233.0 96.0,228.0 120.0,224.0 160.0,219.0 200.0,213.0 225.0,210.0 250.0,207.0 274.0,205.0 299.0,203.0 306.0,202.0 321.0,202.0 324.0,203.0 357.0,203.0 360.0,204.0 384.0,204.0 386.0,203.0 402.0,203.0 416.0,201.0 439.0,201.0 455.0,199.0 466.0,198.0 492.0,197.0 532.0,192.0 552.0,186.0 572.0,180.0 592.0,172.0 612.0,164.0 632.0,156.0 652.0,147.0 664.0,142.0 678.0,138.0 718.0,127.0 758.0,114.0 778.0,105.0 798.0,97.0 818.0,89.0 834.0,82.0 848.0,78.0 878.0,74.0 904.0,71.0 936.0,66.0 963.0,60.0 989.0,56.0 1016.0,50.0 1029.0,48.0 1058.0,48.0"/>
<polyline class="pl" stroke="#ff1000" points="1.0,268.5 20.0,259.5 40.0,250.5 60.0,241.5 80.0,233.5 96.0,228.5 120.0,224.5 160.0,219.5 200.0,213.5 225.0,210.5 250.0,207.5 274.0,205.5 299.0,203.5 306.0,202.5 321.0,202.5 324.0,203.5 357.0,203.5 360.0,204.5 384.0,204.5 386.0,203.5 402.0,203.5 416.0,201.5 439.0,201.5 455.0,199.5 466.0,198.5 492.0,197.5 532.0,192.5 552.0,186.5 572.0,180.5 592.0,172.5 612.0,164.5 632.0,156.5 652.0,147.5 664.0,142.5 678.0,138.5 718.0,127.5 758.0,114.5 778.0,105.5 798.0,97.5 818.0,89.5 834.0,82.5 848.0,78.5 878.0,74.5 904.0,71.5 936.0,66.5 963.0,60.5 989.0,56.5 1016.0,50.5 1029.0,48.5 1057.0,48.5"/>
<polyline class="pl" stroke="#ffff00" points="1.5,573.0 4.0,587.0 8.0,605.0 12.0,614.0 17.0,620.0 22.0,622.0 28.0,622.5 32.0,624.5 40.0,626.0 54.0,626.5"/>
<polyline class="pl" stroke="#ffff00" points="390.0,626.5 406.0,623.0 412.0,623.0 422.0,626.5 438.0,626.5 462.0,622.4 482.0,626.5 494.0,626.5 506.0,623.6 522.0,622.4 528.0,619.0 536.0,608.0 540.0,598.0 546.0,589.0 554.0,580.0 560.0,573.0 567.0,561.0 573.0,551.6 576.0,550.4 580.0,553.6 584.0,566.0 590.0,579.0 597.0,589.0 604.0,599.0 612.0,605.0 618.0,605.0 625.0,599.0 634.0,600.4 638.0,599.0 644.0,594.0 647.0,596.0 651.0,602.0 656.0,605.0 660.0,609.0 664.0,618.0 669.0,626.5"/>
<polyline class="pl" stroke="#ffff00" points="738.0,626.5 743.5,624.5 750.0,619.3 754.4,615.0 759.9,619.0 765.8,619.3 769.0,620.6 775.6,620.6 780.0,617.3 785.4,610.0 790.6,604.9 796.5,604.0 798.4,607.5 802.4,612.7 805.6,615.0 810.2,617.3 813.5,616.4 818.0,620.6 824.6,623.2 830.8,626.5"/>
<polyline class="pl" stroke="#f4f4f4" points="1.5,461.0 4.0,485.0 6.0,524.0 9.0,560.0 12.0,581.0 15.0,596.0 20.0,606.0 26.0,608.6 30.0,615.5 33.0,620.0 38.0,620.5 43.0,623.0 50.0,623.5 54.0,626.5 389.0,626.5 400.0,621.4 410.0,621.4 424.0,626.5 436.0,626.5 462.0,618.0 484.0,626.5 492.0,626.5 502.0,620.0 514.0,617.6 524.0,615.0 529.0,610.0 532.0,600.0 536.0,580.0 538.0,560.0 540.0,542.0 542.0,534.0 546.0,524.0 550.5,515.0 554.7,496.4 560.6,484.5 563.1,472.7 564.8,457.4 566.5,447.3 569.9,439.7 571.6,428.7 573.3,419.4 576.7,416.3 580.0,426.0 581.7,438.8 583.4,455.8 586.0,471.0 588.5,486.2 590.2,501.4 594.4,509.9 599.0,528.0 604.0,548.0 608.0,556.0 611.6,565.0 618.0,562.4 622.0,550.0 625.4,542.4 629.0,546.4 632.4,545.6 636.0,552.4 640.0,537.0 643.0,527.0 646.0,528.0 649.0,544.0 652.0,554.0 656.0,560.0 659.0,571.0 662.0,588.0 665.0,606.0 668.0,620.0 670.0,626.5 738.0,626.5 741.0,619.3 747.5,611.4 751.4,598.4 754.4,591.6 757.3,598.4 759.9,604.9 764.4,607.5 768.4,611.2 775.6,611.2 778.2,606.9 782.1,604.9 784.0,594.4 786.0,581.4 788.6,572.2 791.9,565.7 795.2,565.4 797.4,569.6 799.1,580.0 801.0,587.9 803.0,595.1 806.9,597.7 810.2,602.3 813.5,601.2 816.7,606.9 820.7,614.0 823.9,615.4 827.2,621.2 830.8,626.5 950.0,626.5 952.0,625.5 956.0,625.5 958.0,624.5 962.0,625.5 966.0,624.5 971.0,624.5"/>
<polyline class="pl" stroke="#ffff00" stroke-dasharray="3 3" points="950.0,626.5 953.0,624.5 957.0,625.5 960.0,624.5 964.0,625.5 967.0,624.5 971.0,624.5"/>
<g clip-path="url(#cpd)">
<use href="#dia" x="490" y="627"/>
<use href="#dia" x="522" y="621"/>
<use href="#dia" x="528" y="616"/>
<use href="#dia" x="531" y="605"/>
<use href="#dia" x="545" y="587"/>
<use href="#dia" x="548" y="581"/>
<use href="#dia" x="559" y="564"/>
<use href="#dia" x="632" y="601"/>
<use href="#dia" x="744" y="621"/>
<use href="#dia" x="778" y="613"/>
<use href="#dia" x="940" y="629"/>
</g>
<rect x="5.5" y="3.5" width="12" height="10" rx="2" fill="none" stroke="#9a9a9a"/>
<rect x="11.5" y="5.5" width="4.5" height="6" fill="#9a9a9a"/>
<path d="M1042.5 24.5 L1047.5 29.5 L1042.5 34.5 L1037.5 29.5 Z" fill="none" stroke="#787878"/>
<rect x="1055.5" y="24.5" width="11" height="10" rx="2" fill="none" stroke="#8a8a8a"/>
<rect x="1062" y="26" width="3" height="7" fill="#8a8a8a"/>
<circle cx="134" cy="29.3" r="6" fill="#8c8c8c"/>
<path d="M131 28.3 l3 3 l3 -3" fill="none" stroke="#1a1a1a" stroke-width="1.4"/>
<circle cx="7.7" cy="405.2" r="6" fill="#8c8c8c"/>
<path d="M4.7 404.2 l3 3 l3 -3" fill="none" stroke="#1a1a1a" stroke-width="1.4"/>
</svg>
<div id="txt"><span class="t tb" style="left:28.5px;top:0.6px;">分时</span>
<span class="t tb" style="left:61.5px;top:0.6px;">1分钟</span>
<span class="t tb" style="left:100.5px;top:0.6px;">5分钟</span>
<span class="t tb" style="left:139px;top:0.6px;">15分钟</span>
<span class="t tb" style="left:185.5px;top:0.6px;">30分钟</span>
<span class="t tb" style="left:231.5px;top:0.6px;">60分钟</span>
<span class="t tb sel" style="left:278px;top:0.6px;">日线</span>
<span class="t tb" style="left:312px;top:0.6px;">周线</span>
<span class="t tb" style="left:345.5px;top:0.6px;">月线</span>
<span class="t tb" style="left:378.5px;top:0.6px;">多周期</span>
<span class="t tb" style="left:422.5px;top:0.6px;">更多</span>
<span class="t tb" style="left:450.5px;top:0.6px;">&gt;</span>
<span class="t tb" style="left:806px;top:0.6px;width:33px;text-align:center">复权</span>
<span class="t tb" style="left:840px;top:0.6px;width:34px;text-align:center">叠加</span>
<span class="t tb" style="left:875px;top:0.6px;width:34px;text-align:center">多股</span>
<span class="t tb" style="left:910px;top:0.6px;width:34px;text-align:center">统计</span>
<span class="t tb" style="left:945px;top:0.6px;width:34px;text-align:center">画线</span>
<span class="t tb" style="left:980px;top:0.6px;width:34px;text-align:center">F10</span>
<span class="t tb" style="left:1015px;top:0.6px;width:34px;text-align:center">标记</span>
<span class="t tb" style="left:1050px;top:0.6px;width:34px;text-align:center">+自选</span>
<span class="t tb" style="left:1085px;top:0.6px;width:36px;text-align:center">返回</span>
<span class="t r2" style="left:3px;top:20px;">吉林敖东(日线.前复权)</span>
<span class="t r2 ma" style="left:145px;top:20px;color:#e4e4e4">MA5: 18.72</span>
<span class="t r2 ma" style="left:209.5px;top:20px;color:#ffff00">MA10: 18.86</span>
<span class="t r2 ma" style="left:282px;top:20px;color:#ff00ff">MA20: 19.72</span>
<span class="t r2 ma" style="left:353.5px;top:20px;color:#00ff00">MA60: 19.59</span>
<span class="t hold" style="left:964px;top:348.7px;color:#ff1010">机构持有55%</span>
<span class="t hold" style="left:964px;top:369.2px;color:#00fa00">散户持有45%</span>
<span class="t r2" style="left:17.5px;top:396px;">股朋指标网</span>
<span class="t r2" style="left:82.5px;top:396px;color:#ffff00">黄金钻信号: 0.00</span>
<span class="t r2" style="left:178px;top:396px;">启动引导线: 0.00</span>
<span class="t ax" style="top:34.8px">22.00</span>
<span class="t ax" style="top:74.0px">21.00</span>
<span class="t ax" style="top:113.3px">20.00</span>
<span class="t ax" style="top:152.6px">19.00</span>
<span class="t ax" style="top:191.8px">18.00</span>
<span class="t ax" style="top:231.1px">17.00</span>
<span class="t ax" style="top:270.3px">16.00</span>
<span class="t ax" style="top:309.6px">15.00</span>
<span class="t ax" style="top:348.8px">14.00</span>
<span class="t ax" style="top:413.3px">4.00</span>
<span class="t ax" style="top:439.0px">3.50</span>
<span class="t ax" style="top:464.7px">3.00</span>
<span class="t ax" style="top:490.4px">2.50</span>
<span class="t ax" style="top:516.1px">2.00</span>
<span class="t ax" style="top:541.8px">1.50</span>
<span class="t ax" style="top:567.5px">1.00</span>
<div class="pbox" style="left:1072px;top:430px;width:48px;height:15px"><span>3.52</span></div>
<span class="t tm" style="left:1px;top:629.5px;">2024年</span>
<span class="t tm" style="left:99.5px;top:629.5px;">1</span>
<span class="t tm" style="left:162.5px;top:629.5px;">2</span>
<span class="t tm" style="left:224.5px;top:629.5px;">3</span>
<span class="t tm" style="left:297.5px;top:629.5px;">4</span>
<span class="t tm" style="left:371.5px;top:629.5px;">5</span>
<span class="t tm" style="left:437.5px;top:629.5px;">6</span>
<span class="t tm" style="left:507.5px;top:629.5px;">7</span>
<span class="t tm" style="left:587.5px;top:629.5px;">8</span>
<span class="t tm" style="left:737.5px;top:629.5px;">10</span>
<span class="t tm" style="left:796.5px;top:629.5px;">11</span>
<span class="t tm" style="left:866.5px;top:629.5px;">12</span>
<span class="t tm" style="left:946.5px;top:629.5px;">1</span>
<div class="pbox" style="left:606px;top:631px;width:78px;height:15px"><span style="left:2px">2025/08/11/一</span></div>
<span class="t bt" style="left:5px;top:648.7px;">指标</span>
<span class="t bt" style="left:46px;top:648.7px;">模板</span>
<span class="t bt" style="left:823px;top:648.7px;">小</span>
<span class="t bt" style="left:843px;top:648.7px;color:#00e5ff">日线</span></div>
<div id="side"><i style="top:25px"></i><i style="top:45px"></i><i style="top:142px"></i><i style="top:239px"></i><i style="top:336px"></i><i style="top:418px"></i><i style="top:439px"></i><span class="sd" style="top:23.5px;color:#f0f0f0">委比</span><span class="sd" style="top:44.0px;color:#f0f0f0">卖五</span><span class="sd" style="top:63.2px;color:#f0f0f0">卖四</span><span class="sd" style="top:82.3px;color:#f0f0f0">卖三</span><span class="sd" style="top:101.4px;color:#f0f0f0">卖二</span><span class="sd" style="top:120.6px;color:#f0f0f0">卖一</span><span class="sd" style="top:140.5px;color:#f0f0f0">买一</span><span class="sd" style="top:159.5px;color:#f0f0f0">买二</span><span class="sd" style="top:178.5px;color:#f0f0f0">买三</span><span class="sd" style="top:197.5px;color:#f0f0f0">买四</span><span class="sd" style="top:216.5px;color:#f0f0f0">买五</span><span class="sd" style="top:238.0px;color:#f0f0f0">现价</span><span class="sd" style="top:257.0px;color:#f0f0f0">涨跌</span><span class="sd" style="top:276.0px;color:#f0f0f0">涨幅</span><span class="sd" style="top:295.0px;color:#f0f0f0">总量</span><span class="sd" style="top:314.0px;color:#f0f0f0">外盘</span><span class="sd" style="top:336.0px;color:#f0f0f0">换手</span><span class="sd" style="top:355.0px;color:#f0f0f0">净资</span><span class="sd" style="top:374.0px;color:#f0f0f0">收益</span><span class="sd" style="top:396.0px;color:#e8e800">自选</span><span class="sd" style="top:417.0px;color:#f0f0f0">交易</span><span class="sd one" style="top:437.5px">1</span><span class="sd one" style="top:455.4px">1</span><span class="sd one" style="top:473.3px">1</span><span class="sd one" style="top:491.2px">1</span><span class="sd one" style="top:509.1px">1</span><span class="sd one" style="top:527.0px">1</span><span class="sd one" style="top:544.9px">1</span><span class="sd one" style="top:562.8px">1</span><span class="sd one" style="top:580.7px">1</span></div>
<div id="wm"><b>指标公式网</b><span>www.zbgs3.com</span></div>
</body></html>
